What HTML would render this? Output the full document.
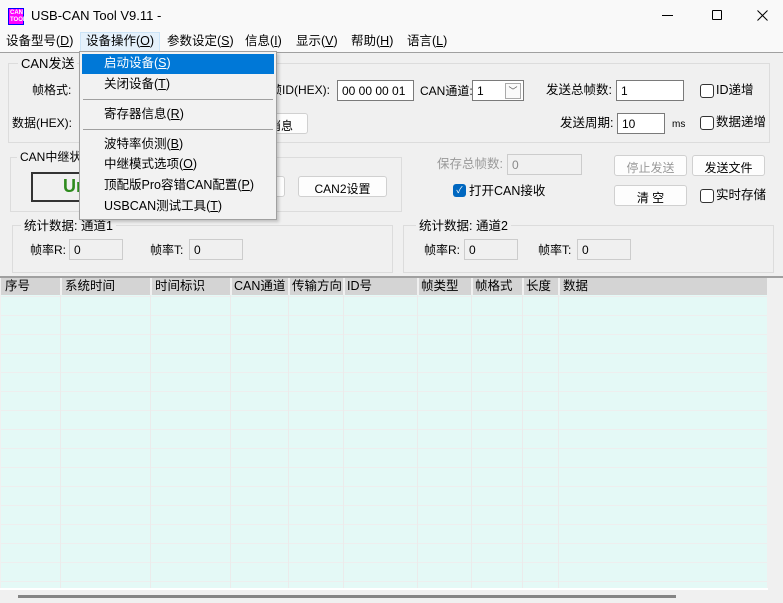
<!DOCTYPE html><html><head><meta charset="utf-8"><style>
*{box-sizing:border-box;margin:0;padding:0}
body{width:783px;height:603px;background:#f0f0f0;font-family:"Liberation Sans","Noto Sans CJK SC",sans-serif;font-size:12px;color:#000;position:relative;overflow:hidden}
.a{position:absolute;white-space:nowrap;line-height:1}
.inp{position:absolute;background:#fff;border:1px solid #7a7a7a;font-size:12px;padding:3px 0 0 4px}
.dis{background:#f0f0f0;border-color:#ccc;color:#888}
.btn{position:absolute;background:#fdfdfd;border:1px solid #d0d0d0;border-radius:3px;text-align:center;font-size:12px;padding-top:3px}
.grp{position:absolute;border:1px solid #dcdcdc}
.gt{position:absolute;background:#f0f0f0;padding:0 3px;line-height:1}
.cb{position:absolute;width:13px;height:13px;border:1px solid #333;border-radius:3px;background:#fff}
.mi{position:absolute;left:24px;font-size:12.5px;line-height:1}
u{text-decoration:underline}
</style></head><body>
<div class="a" style="left:0;top:0;width:783px;height:52px;background:#f9f9f9"></div>
<div class="a" style="left:8px;top:8px;width:16px;height:17px;background:#f0f;border:1px solid #00f"><div style="font-size:6px;color:#fff;line-height:7px;text-align:center;font-weight:bold;background:#f0f;margin:1px">CAN<br>TOOL</div></div>
<div class="a" style="left:31px;top:9px;font-size:13px">USB-CAN Tool V9.11 -</div>
<div class="a" style="left:662px;top:15px;width:11px;height:1px;background:#000"></div>
<div class="a" style="left:712px;top:10px;width:10px;height:10px;border:1px solid #000;border-radius:1px"></div>
<svg class="a" style="left:757px;top:10px" width="11" height="11"><path d="M0.5 0.5L10.5 10.5M10.5 0.5L0.5 10.5" stroke="#000" stroke-width="1"/></svg>
<div class="a" style="left:80px;top:32px;width:80px;height:20px;background:#e5f1fb;border:1px solid #cce4f7"></div>
<div class="a" style="left:6px;top:35px;font-size:12.5px">设备型号(<u>D</u>)</div>
<div class="a" style="left:86px;top:35px;font-size:12.5px">设备操作(<u>O</u>)</div>
<div class="a" style="left:167px;top:35px;font-size:12.5px">参数设定(<u>S</u>)</div>
<div class="a" style="left:245px;top:35px;font-size:12.5px">信息(<u>I</u>)</div>
<div class="a" style="left:296px;top:35px;font-size:12.5px">显示(<u>V</u>)</div>
<div class="a" style="left:351px;top:35px;font-size:12.5px">帮助(<u>H</u>)</div>
<div class="a" style="left:407px;top:35px;font-size:12.5px">语言(<u>L</u>)</div>
<div class="a" style="left:0;top:52px;width:783px;height:1px;background:#a0a0a0"></div>

<div class="grp" style="left:8px;top:63px;width:762px;height:80px"></div>
<div class="gt" style="left:18px;top:57px;font-size:13px">CAN发送</div>
<div class="a" style="left:32px;top:84px">帧格式:</div>
<div class="a" style="left:12px;top:117px">数据(HEX):</div>
<div class="a" style="left:270px;top:84px">帧ID(HEX):</div>
<div class="inp" style="left:337px;top:80px;width:77px;height:21px">00 00 00 01</div>
<div class="a" style="left:420px;top:85px">CAN通道:</div>
<div class="inp" style="left:472px;top:80px;width:52px;height:21px">1</div>
<div class="a" style="left:505px;top:83px;width:16px;height:16px;border:1px solid #aaa;background:#fafafa;font-size:9px;text-align:center;line-height:14px;color:#555">﹀</div>
<div class="a" style="left:546px;top:84px;font-size:12.5px">发送总帧数:</div>
<div class="inp" style="left:616px;top:80px;width:68px;height:21px">1</div>
<div class="cb" style="left:700px;top:84px;width:14px;height:14px"></div><div class="a" style="left:716px;top:84px;font-size:12.5px">ID递增</div>
<div class="btn" style="left:250px;top:113px;width:58px;height:21px;text-align:right;padding-right:14px">消息</div>
<div class="a" style="left:560px;top:117px;font-size:12.5px">发送周期:</div>
<div class="inp" style="left:617px;top:113px;width:48px;height:21px">10</div>
<div class="a" style="left:672px;top:120px;font-size:10px">ms</div>
<div class="cb" style="left:700px;top:116px;width:14px;height:14px"></div><div class="a" style="left:716px;top:116px;font-size:12.5px">数据递增</div>

<div class="grp" style="left:10px;top:157px;width:392px;height:55px"></div>
<div class="gt" style="left:17px;top:151px">CAN中继状态</div>
<div class="a" style="left:31px;top:172px;width:60px;height:30px;border:2px solid #333;background:#f0f0f0"></div>
<div class="a" style="left:63px;top:177px;font-size:18px;font-weight:bold;color:#2e8b1e">Un</div>
<div class="btn" style="left:230px;top:176px;width:55px;height:21px"></div>
<div class="btn" style="left:298px;top:176px;width:89px;height:21px">CAN2设置</div>
<div class="a" style="left:437px;top:158px;color:#999;font-size:12.5px">保存总帧数:</div>
<div class="inp dis" style="left:507px;top:154px;width:75px;height:21px">0</div>
<div class="a" style="left:453px;top:184px;width:13px;height:13px;background:#0067c0;border-radius:3px;color:#fff;font-size:9px;text-align:center;line-height:13px">✓</div>
<div class="a" style="left:469px;top:185px;font-size:12.5px">打开CAN接收</div>
<div class="btn" style="left:614px;top:155px;width:73px;height:21px;color:#999">停止发送</div>
<div class="btn" style="left:692px;top:155px;width:73px;height:21px">发送文件</div>
<div class="btn" style="left:614px;top:185px;width:73px;height:21px">清 空</div>
<div class="cb" style="left:700px;top:189px;width:14px;height:14px"></div><div class="a" style="left:716px;top:189px;font-size:12.5px">实时存储</div>

<div class="grp" style="left:12px;top:225px;width:381px;height:48px"></div>
<div class="gt" style="left:21px;top:220px;font-size:12.5px">统计数据: 通道1</div>
<div class="a" style="left:30px;top:244px">帧率R:</div>
<div class="inp dis" style="left:69px;top:239px;width:54px;height:21px;color:#000">0</div>
<div class="a" style="left:150px;top:244px">帧率T:</div>
<div class="inp dis" style="left:189px;top:239px;width:54px;height:21px;color:#000">0</div>
<div class="grp" style="left:403px;top:225px;width:371px;height:48px"></div>
<div class="gt" style="left:416px;top:220px;font-size:12.5px">统计数据: 通道2</div>
<div class="a" style="left:424px;top:244px">帧率R:</div>
<div class="inp dis" style="left:464px;top:239px;width:54px;height:21px;color:#000">0</div>
<div class="a" style="left:538px;top:244px">帧率T:</div>
<div class="inp dis" style="left:577px;top:239px;width:54px;height:21px;color:#000">0</div>

<div class="a" style="left:0;top:276px;width:783px;height:2px;background:#a0a0a0"></div>
<div class="a" style="left:1px;top:278px;width:766px;height:311px;background:#e4f9f6;
background-image:linear-gradient(#eeeeee 1px,transparent 1px);background-size:100% 19px;background-position:0 18px"></div>
<svg class="a" style="left:1px;top:278px" width="766" height="311">
<g stroke="#ebebeb">
<line x1="59.5" y1="0" x2="59.5" y2="311"/><line x1="149.5" y1="0" x2="149.5" y2="311"/><line x1="229.5" y1="0" x2="229.5" y2="311"/><line x1="287.5" y1="0" x2="287.5" y2="311"/><line x1="342.5" y1="0" x2="342.5" y2="311"/><line x1="416.5" y1="0" x2="416.5" y2="311"/><line x1="470.5" y1="0" x2="470.5" y2="311"/><line x1="521.5" y1="0" x2="521.5" y2="311"/><line x1="557.5" y1="0" x2="557.5" y2="311"/></g>
</svg>
<div class="a" style="left:1px;top:278px;width:766px;height:17px;background:#d4d4d4"></div>
<svg class="a" style="left:1px;top:278px" width="766" height="17"><g stroke="#f0f0f0" stroke-width="2">
<line x1="60" y1="0" x2="60" y2="17"/><line x1="150" y1="0" x2="150" y2="17"/><line x1="230" y1="0" x2="230" y2="17"/><line x1="288" y1="0" x2="288" y2="17"/><line x1="343" y1="0" x2="343" y2="17"/><line x1="417" y1="0" x2="417" y2="17"/><line x1="471" y1="0" x2="471" y2="17"/><line x1="522" y1="0" x2="522" y2="17"/><line x1="558" y1="0" x2="558" y2="17"/></g></svg>
<div class="a" style="left:5px;top:280px;font-size:12.5px">序号</div>
<div class="a" style="left:65px;top:280px;font-size:12.5px">系统时间</div>
<div class="a" style="left:155px;top:280px;font-size:12.5px">时间标识</div>
<div class="a" style="left:234px;top:280px;font-size:12.5px">CAN通道</div>
<div class="a" style="left:292px;top:280px;font-size:12.5px">传输方向</div>
<div class="a" style="left:347px;top:280px;font-size:12.5px">ID号</div>
<div class="a" style="left:421px;top:280px;font-size:12.5px">帧类型</div>
<div class="a" style="left:475px;top:280px;font-size:12.5px">帧格式</div>
<div class="a" style="left:526px;top:280px;font-size:12.5px">长度</div>
<div class="a" style="left:563px;top:280px;font-size:12.5px">数据</div>
<div class="a" style="left:0;top:588px;width:768px;height:2px;background:#fff"></div>
<div class="a" style="left:18px;top:595px;width:658px;height:3px;background:#858585"></div>

<div class="a" style="left:79px;top:51px;width:198px;height:169px;background:#f2f2f2;border:1px solid #a0a0a0;box-shadow:2px 2px 3px rgba(0,0,0,.2)">
<div class="a" style="left:2px;top:2px;width:192px;height:20px;background:#0078d7"></div>
<div class="mi" style="top:5px;color:#fff">启动设备(<u>S</u>)</div>
<div class="mi" style="top:26px">关闭设备(<u>T</u>)</div>
<div class="a" style="left:3px;top:47px;width:190px;height:1px;background:#a0a0a0"></div>
<div class="mi" style="top:56px">寄存器信息(<u>R</u>)</div>
<div class="a" style="left:3px;top:77px;width:190px;height:1px;background:#a0a0a0"></div>
<div class="mi" style="top:86px">波特率侦测(<u>B</u>)</div>
<div class="mi" style="top:106px">中继模式选项(<u>O</u>)</div>
<div class="mi" style="top:127px">顶配版Pro容错CAN配置(<u>P</u>)</div>
<div class="mi" style="top:148px">USBCAN测试工具(<u>T</u>)</div>
</div>
</body></html>
